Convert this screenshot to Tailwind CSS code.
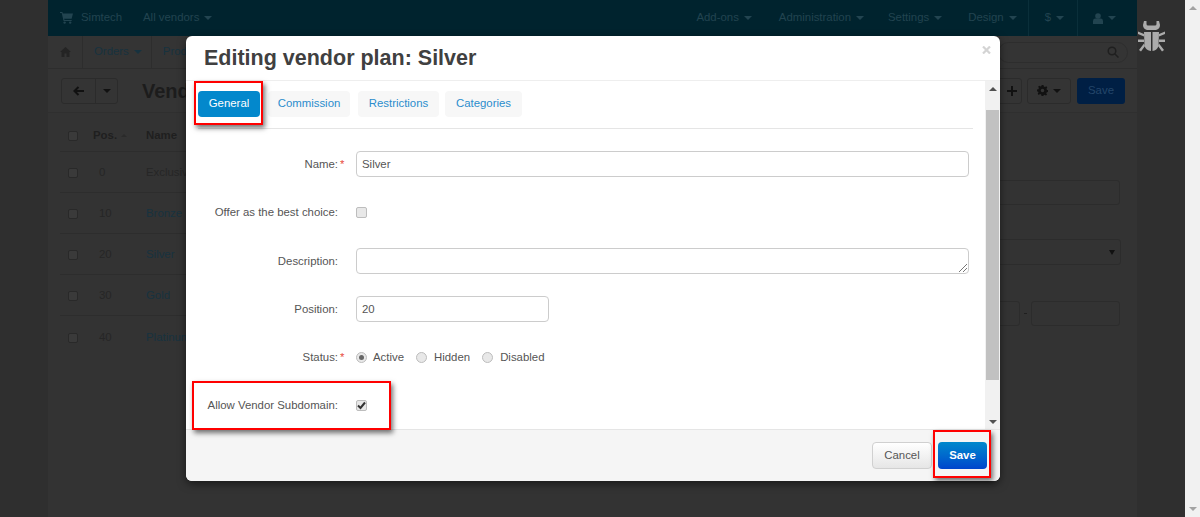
<!DOCTYPE html>
<html><head><meta charset="utf-8"><title>Editing vendor plan</title>
<script src="https://cdn.jsdelivr.net/npm/@tailwindcss/browser@4"></script></head>
<body class="m-0 overflow-hidden">
<div class="relative flex h-[517px] w-[1200px] overflow-hidden bg-[#2e2e2e] font-['Liberation_Sans',Arial,sans-serif] text-[11.4px] text-[#262626]">
  <div class="w-[48px] shrink-0 bg-[#2f2f2f]"></div>
  <div class="flex w-[1089px] shrink-0 flex-col bg-[#333333]">
    <div class="flex h-[36px] items-center bg-[#00232e] text-[#224450]">
      <svg class="ml-[12px] h-[12px] w-[13px]" viewBox="0 0 13 12" fill="#224450"><path d="M0 0h2.4l.4 1.5H13l-1.4 5.3H4.2l.3 1.2h7.2v1H3.600L1.700 1H0z"/><circle cx="4.600" cy="10.600" r="1.200"/><circle cx="10.200" cy="10.600" r="1.200"/></svg>
      <span class="ml-[8px] w-[40px]">Simtech</span>
      <span class="ml-[22px]">All vendors</span><span class="ml-[5px] h-0 w-0 border-x-[4px] border-t-[4px] border-x-transparent border-t-[#224450]"></span>
      <div class="ml-auto flex items-center">
        <span>Add-ons</span><i class="ml-[5px] h-0 w-0 border-x-[4px] border-t-[4px] border-x-transparent border-t-[#224450]"></i>
        <span class="ml-[27px]">Administration</span><i class="ml-[5px] h-0 w-0 border-x-[4px] border-t-[4px] border-x-transparent border-t-[#224450]"></i>
        <span class="ml-[24px]">Settings</span><i class="ml-[5px] h-0 w-0 border-x-[4px] border-t-[4px] border-x-transparent border-t-[#224450]"></i>
        <span class="ml-[26px]">Design</span><i class="ml-[5px] h-0 w-0 border-x-[4px] border-t-[4px] border-x-transparent border-t-[#224450]"></i>
        <span class="ml-[11px] flex h-[36px] items-center border-l border-[#0a2f3a] pl-[16px]">$<i class="ml-[5px] h-0 w-0 border-x-[4px] border-t-[4px] border-x-transparent border-t-[#224450]"></i></span>
        <span class="ml-[13px] flex h-[36px] w-[60px] items-center border-l border-[#0a2f3a] pl-[15px]"><svg class="h-[11px] w-[10px]" viewBox="0 0 10 11" fill="#224450"><circle cx="5" cy="3" r="2.800"/><path d="M0 11V8q0-2 2-2.400h6q2 .4 2 2.400v3z"/></svg><i class="ml-[5px] h-0 w-0 border-x-[4px] border-t-[4px] border-x-transparent border-t-[#224450]"></i></span>
      </div>
    </div>
    <div class="flex h-[33px] items-center border-b border-[#2d2d2d] bg-[#343434]">
      <svg class="ml-[12px] h-[10px] w-[11px]" viewBox="0 0 11 10" fill="#242424"><path d="M5.500 0 0 5h1.500v5h3V6.500h2V10h3V5H11z"/></svg>
      <span class="ml-[11px] h-[33px] border-l border-[#2d2d2d]"></span>
      <span class="ml-[11px] text-[#17323f]">Orders</span><i class="ml-[5px] h-0 w-0 border-x-[4px] border-t-[4px] border-x-transparent border-t-[#17323f]"></i>
      <span class="ml-[9px] h-[33px] border-l border-[#2d2d2d]"></span>
      <span class="ml-[11px] text-[#17323f]">Products</span>
      <div class="ml-auto mr-[9px] flex h-[21px] w-[130px] items-center justify-end rounded-full border border-[#2d2d2d] pr-[8px]"><svg class="h-[12px] w-[12px]" viewBox="0 0 12 12" fill="none" stroke="#1f1f1f" stroke-width="1.500"><circle cx="5" cy="5" r="3.800"/><path d="m8 8 3.500 3.500"/></svg></div>
    </div>
    <div class="flex h-[44px] items-center border-b border-[#2f2f2f] bg-[#343434]">
      <div class="ml-[13px] flex h-[26px] w-[57px] rounded-[3px] border border-[#2b2b2b]">
        <div class="flex w-[34px] items-center justify-center border-r border-[#2b2b2b]"><svg class="h-[10px] w-[11px]" viewBox="0 0 11 10" fill="none" stroke="#111" stroke-width="2"><path d="M5.500 1 1.400 5l4.100 4M1.500 5H11"/></svg></div>
        <div class="flex flex-1 items-center justify-center"><i class="h-0 w-0 border-x-[4px] border-t-[4px] border-x-transparent border-t-[#111]"></i></div>
      </div>
      <span class="ml-[24px] text-[20px] font-bold text-[#1c1c1c]">Vendor plans</span>
      <div class="ml-auto flex items-center">
        <div class="flex h-[26px] w-[28px] items-center justify-end rounded-[3px] border border-[#2b2b2b] pr-[4px]"><svg class="h-[10px] w-[10px]" viewBox="0 0 10 10" fill="#111"><path d="M4 0h2v4h4v2H6v4H4V6H0V4h4z"/></svg></div>
        <div class="ml-[5px] flex h-[26px] w-[44px] items-center justify-center rounded-[3px] border border-[#2b2b2b]"><svg class="h-[11px] w-[11px]" viewBox="0 0 11 11" fill="#111"><path fill-rule="evenodd" d="M4.500 0h2l.3 1.500 1.200.5L9.300 1.200l1 1.200-.8 1.300.5 1.200 1 .1v2l-1.200.2-.5 1.200.8 1.200-1.200 1-1.300-.8-1.100.5L6.500 11h-2l-.3-1.400-1.200-.5-1.300.8-1-1.100.8-1.300-.5-1.100L0 6.500v-2l1.400-.3.500-1.200-.8-1.200 1.200-1 1.200.8 1.100-.5zM5.500 3.700a1.800 1.800 0 1 0 0 3.600 1.800 1.800 0 0 0 0-3.600"/></svg><i class="ml-[5px] h-0 w-0 border-x-[4px] border-t-[4px] border-x-transparent border-t-[#111]"></i></div>
        <div class="ml-[6px] mr-[12px] flex h-[26px] w-[48px] items-center justify-center rounded-[3px] bg-[#001f44] text-[#24466a]">Save</div>
      </div>
    </div>
    <div class="flex">
      <div class="w-[868px]">
        <div class="ml-[12px] flex h-[39px] w-[856px] items-center border-b border-[#2d2d2d] pt-[7px] font-bold text-[#1f1f1f]">
          <i class="ml-[8px] h-[10px] w-[10px] rounded-[2px] border border-[#292929] bg-[#3a3a3a]"></i><span class="ml-[15px]">Pos.</span><i class="ml-[4px] h-0 w-0 border-x-[3px] border-b-[3px] border-x-transparent border-b-[#2a2a2a]"></i><span class="ml-[19px]">Name</span>
        </div>
        <div class="ml-[12px] flex h-[41px] w-[856px] items-center border-b border-[#2d2d2d] pt-[2px]"><i class="ml-[8px] h-[10px] w-[10px] rounded-[2px] border border-[#292929] bg-[#3a3a3a]"></i><span class="ml-[21px] w-[47px]">0</span><span>Exclusive</span></div>
        <div class="ml-[12px] flex h-[41px] w-[856px] items-center border-b border-[#2d2d2d] pt-[2px]"><i class="ml-[8px] h-[10px] w-[10px] rounded-[2px] border border-[#292929] bg-[#3a3a3a]"></i><span class="ml-[21px] w-[47px]">10</span><span class="text-[#17323f]">Bronze</span></div>
        <div class="ml-[12px] flex h-[41px] w-[856px] items-center border-b border-[#2d2d2d] pt-[2px]"><i class="ml-[8px] h-[10px] w-[10px] rounded-[2px] border border-[#292929] bg-[#3a3a3a]"></i><span class="ml-[21px] w-[47px]">20</span><span class="text-[#17323f]">Silver</span></div>
        <div class="ml-[12px] flex h-[41px] w-[856px] items-center border-b border-[#2d2d2d] pt-[2px]"><i class="ml-[8px] h-[10px] w-[10px] rounded-[2px] border border-[#292929] bg-[#3a3a3a]"></i><span class="ml-[21px] w-[47px]">30</span><span class="text-[#17323f]">Gold</span></div>
        <div class="ml-[12px] flex h-[41px] w-[856px] items-center pt-[2px]"><i class="ml-[8px] h-[10px] w-[10px] rounded-[2px] border border-[#292929] bg-[#3a3a3a]"></i><span class="ml-[21px] w-[47px]">40</span><span class="text-[#17323f]">Platinum</span></div>
      </div>
      <div class="flex-1 pl-[68px] pt-[67px]">
        <div class="h-[25px] w-[136px] rounded-[3px] border border-[#2c2c2c]"></div>
        <div class="mt-[34px] flex h-[26px] w-[137px] items-center justify-end rounded-[3px] border border-[#2c2c2c] pr-[5px]"><i class="h-0 w-0 border-x-[3px] border-t-[5px] border-x-transparent border-t-[#111]"></i></div>
        <div class="mt-[36px] flex items-center"><div class="h-[25px] w-[36px] rounded-[3px] border border-[#2c2c2c]"></div><i class="mx-[4px] h-[1px] w-[3px] bg-[#1f1f1f]"></i><div class="h-[25px] w-[89px] rounded-[3px] border border-[#2c2c2c]"></div></div>
      </div>
    </div>
  </div>
  <div class="relative w-[48px] shrink-0 bg-[#2f2f2f]">
    <svg class="absolute left-[1px] top-[21px] h-[31px] w-[27px]" viewBox="0 0 27 31" fill="#ababab"><path d="M6 0h2.500v3q0 1.500 1.500 1.500h7q1.500 0 1.500-1.500V0H21l1 4q0 4-4 5H9Q5 8 5 4z"/><path d="M6 11h7v19q-5-.5-6.500-5z"/><path d="M14.500 11H21l-.5 14q-1.500 4.500-6 5z"/><path d="M0 10.500l6 2.500v2.500L0 13zM27 10.500 21 13v2.500l6-2.500zM0 18.500h6v2.500H0zM21 18.500h6V21h-6zM1 29l5-6.500 1 2.500-4 5.500zM26 29l-5-6.500-1 2.500 4 5.500z"/></svg>
  </div>
  <div class="relative flex-1 bg-[#f1f1f1]">
    <i class="absolute left-[4px] top-[6px] h-0 w-0 border-x-[4px] border-b-[4px] border-x-transparent border-b-[#a3a3a3]"></i>
    <i class="absolute bottom-[6px] left-[4px] h-0 w-0 border-x-[4px] border-t-[4px] border-x-transparent border-t-[#a3a3a3]"></i>
  </div>

  <div class="absolute left-[186px] top-[36px] flex h-[445px] w-[814px] flex-col rounded-[6px] bg-white text-[#555] shadow-[0_3px_9px_rgba(0,0,0,0.5)]">
    <div class="relative flex h-[45px] shrink-0 items-center border-b border-[#eeeeee] pb-[1px] pl-[18px]">
      <span class="text-[21.5px] font-bold leading-[24px] text-[#404040]">Editing vendor plan: Silver</span>
      <svg class="absolute right-[9px] top-[10px] h-[8px] w-[9px]" viewBox="0 0 9 8" fill="none" stroke="#d4d4d4" stroke-width="2.200"><path d="m1 .5 7 7M8 .5l-7 7"/></svg>
    </div>
    <div class="flex min-h-0 flex-1">
      <div class="w-[799px] shrink-0 pl-[12px] pr-[12px]">
        <div class="flex h-[48px] items-start border-b border-[#e5e5e5] pt-[10px]">
          <span class="flex h-[26px] w-[62px] items-center justify-center rounded-[4px] bg-[#0388cc] text-white">General</span>
          <span class="ml-[8px] flex h-[26px] w-[82px] items-center justify-center rounded-[4px] bg-[#f7f7f7] text-[#2b8dcd]">Commission</span>
          <span class="ml-[8px] flex h-[26px] w-[81px] items-center justify-center rounded-[4px] bg-[#f7f7f7] text-[#2b8dcd]">Restrictions</span>
          <span class="ml-[6px] flex h-[26px] w-[77px] items-center justify-center rounded-[4px] bg-[#f7f7f7] text-[#2b8dcd]">Categories</span>
        </div>
        <div class="pt-[22px]">
          <div class="flex h-[26px] items-center">
            <div class="w-[140px] pt-[2px] text-right">Name:</div><span class="ml-[2px] w-[16px] pt-[2px] text-[#e74c3c]">*</span>
            <div class="flex h-[26px] w-[613px] items-center rounded-[4px] border border-[#cccccc] px-[5px] pt-[2px]">Silver</div>
          </div>
          <div class="mt-[22px] flex h-[26px] items-center">
            <div class="w-[140px] whitespace-nowrap pt-[2px] text-right">Offer as the best choice:</div>
            <i class="ml-[18px] h-[11px] w-[11px] rounded-[2px] border border-[#bdbdbd] bg-[#e8e8e8]"></i>
          </div>
          <div class="mt-[23px] flex h-[26px] items-center">
            <div class="w-[140px] pt-[2px] text-right">Description:</div>
            <div class="relative ml-[18px] h-[26px] w-[613px] rounded-[4px] border border-[#cccccc]"><svg class="absolute bottom-[1px] right-[1px] h-[8px] w-[8px]" viewBox="0 0 8 8" stroke="#777" stroke-width="1"><path d="M0 8 8 0M4 8l4-4"/></svg></div>
          </div>
          <div class="mt-[22px] flex h-[26px] items-center">
            <div class="w-[140px] pt-[2px] text-right">Position:</div>
            <div class="ml-[18px] flex h-[26px] w-[193px] items-center rounded-[4px] border border-[#cccccc] px-[5px] pt-[2px]">20</div>
          </div>
          <div class="mt-[22px] flex h-[26px] items-center">
            <div class="w-[140px] pt-[2px] text-right">Status:</div><span class="ml-[2px] w-[16px] pt-[2px] text-[#e74c3c]">*</span>
            <i class="flex h-[11px] w-[11px] items-center justify-center rounded-full border border-[#bdbdbd] bg-[#e8e8e8]"><b class="h-[5px] w-[5px] rounded-full bg-[#666]"></b></i><span class="ml-[6px] pt-[2px]">Active</span>
            <i class="ml-[12px] h-[11px] w-[11px] rounded-full border border-[#bdbdbd] bg-[#e8e8e8]"></i><span class="ml-[7px] pt-[2px]">Hidden</span>
            <i class="ml-[12px] h-[11px] w-[11px] rounded-full border border-[#bdbdbd] bg-[#e8e8e8]"></i><span class="ml-[7px] pt-[2px]">Disabled</span>
          </div>
          <div class="mt-[22px] flex h-[26px] items-center">
            <div class="w-[140px] whitespace-nowrap pt-[2px] text-right">Allow Vendor Subdomain:</div>
            <i class="ml-[18px] flex h-[11px] w-[11px] items-center justify-center rounded-[2px] border border-[#bdbdbd] bg-[#e8e8e8]"><svg class="h-[9px] w-[9px]" viewBox="0 0 9 9" fill="none" stroke="#333" stroke-width="2"><path d="m1 4.500 2.500 2.500L8 1.500"/></svg></i>
          </div>
        </div>
      </div>
      <div class="relative w-[15px] bg-[#f1f1f1]">
        <i class="absolute left-[4px] top-[6px] h-0 w-0 border-x-[4px] border-b-[4px] border-x-transparent border-b-[#505050]"></i>
        <div class="absolute left-[1px] top-[29px] h-[270px] w-[13px] bg-[#c1c1c1]"></div>
        <i class="absolute bottom-[5px] left-[4px] h-0 w-0 border-x-[4px] border-t-[4px] border-x-transparent border-t-[#505050]"></i>
      </div>
    </div>
    <div class="flex h-[52px] shrink-0 items-center justify-end gap-[6px] rounded-b-[6px] border-t border-[#e5e5e5] bg-[#f5f5f5] pr-[13px]">
      <span class="flex h-[27px] w-[60px] items-center justify-center rounded-[4px] border border-[#d0d0d0] bg-gradient-to-b from-white to-[#e6e6e6] text-[#555]">Cancel</span>
      <span class="flex h-[27px] w-[49px] items-center justify-center rounded-[4px] bg-gradient-to-b from-[#0088cc] to-[#0044cc] font-bold text-white">Save</span>
    </div>
  </div>

  <div class="absolute left-[194px] top-[81px] h-[44px] w-[69px] border-2 border-[#f00] shadow-[2px_3px_5px_rgba(0,0,0,0.55)]"></div>
  <div class="absolute left-[192px] top-[381px] h-[49px] w-[199px] border-2 border-[#f00] shadow-[2px_3px_5px_rgba(0,0,0,0.55)]"></div>
  <div class="absolute left-[933px] top-[430px] h-[48px] w-[58px] border-2 border-[#f00] shadow-[2px_3px_5px_rgba(0,0,0,0.55)]"></div>
</div>
</body></html>
